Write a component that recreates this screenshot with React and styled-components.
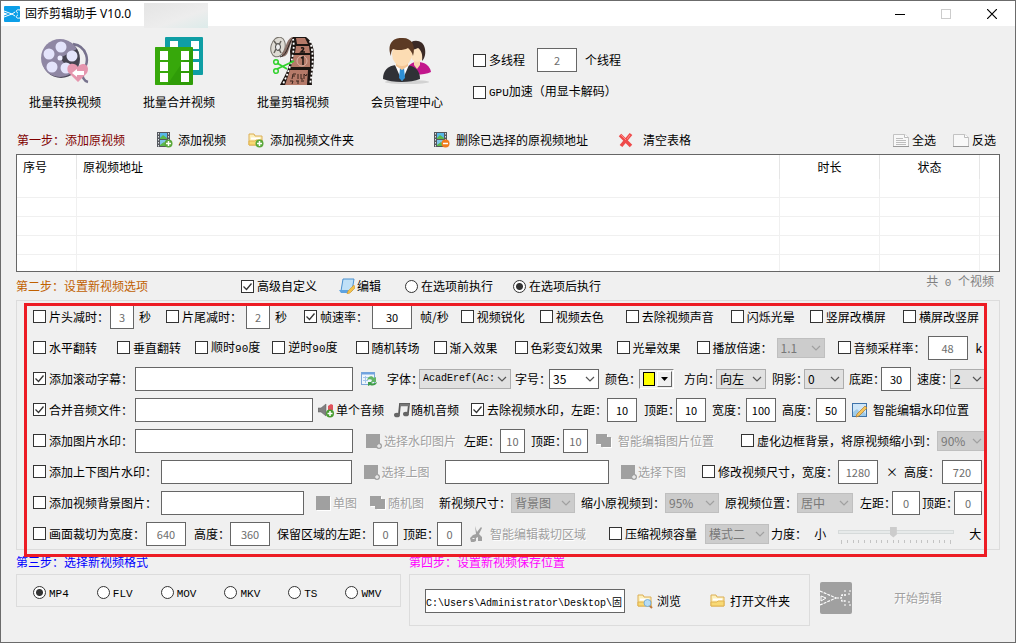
import React from 'react';
import styled, { createGlobalStyle, css } from 'styled-components';

const GlobalStyle = createGlobalStyle`
  * {
    box-sizing: border-box;
  }
  body {
    margin: 0;
    background: #f0f0f0;
    color: #000;
    font-family: 'Noto Sans CJK SC', sans-serif;
    font-size: 12px;
    line-height: 16px;
  }
  button,
  input,
  select {
    font: inherit;
    color: inherit;
    margin: 0;
  }
  svg {
    display: block;
    flex: none;
  }
`;

const gap = css`
  margin-left: ${({ $gap = 0 }) => $gap}px;
`;

const Window = styled.div`
  min-height: 100vh;
  display: flex;
  flex-direction: column;
  border: 1px solid #6b6b6b;
  background: #f0f0f0;
  white-space: nowrap;
  overflow: hidden;
`;

const TitleBar = styled.header`
  height: 25px;
  display: flex;
  align-items: center;
  padding-left: 3px;
  background: #fff;
`;

const Title = styled.h1`
  margin: 0 0 0 5px;
  width: 115px;
  font-family: 'Noto Sans', 'Noto Sans CJK SC', sans-serif;
  font-size: 12px;
  font-weight: normal;
`;

const Smudge = styled.span`
  width: 64px;
  height: 25px;
  margin: 2px 0 0 4px;
  align-self: flex-start;
  background: linear-gradient(160deg, #e4e4e4, #ededed 60%, #dcebea);
`;

const WindowButtons = styled.div`
  display: flex;
  margin-left: auto;
`;

const WindowButton = styled.button`
  width: 46px;
  height: 25px;
  padding: 0;
  display: flex;
  align-items: center;
  justify-content: center;
  border: 0;
  background: none;
`;

const Toolbar = styled.div`
  display: flex;
  height: 100px;
  padding: 11px 8px 0 7px;
`;

const ToolButton = styled.button`
  width: 114px;
  height: 74px;
  padding: 0;
  display: flex;
  flex-direction: column;
  align-items: center;
  gap: 8px;
  border: 0;
  background: none;
  line-height: 18px;
`;

const Threads = styled.div`
  display: flex;
  flex-direction: column;
  gap: 8px;
  padding: 11px 0 0 9px;
`;

const ThreadRow = styled.div`
  display: flex;
  align-items: center;
  height: 24px;
`;

const ActionBar = styled.div`
  display: flex;
  align-items: center;
  height: 28px;
  padding: 0 19px 0 16px;
`;

const StepTitle = styled.h2`
  margin: 0;
  font-size: 12px;
  font-weight: normal;
  color: ${({ $color }) => $color};
`;

const IconButton = styled.button`
  ${gap}
  flex: none;
  display: flex;
  align-items: center;
  gap: ${({ $space = 2 }) => $space}px;
  padding: 0;
  border: 0;
  background: none;
  &:disabled {
    color: #a0a0a0;
    text-shadow: 1px 1px #fff;
  }
`;

const Push = styled.div`
  display: flex;
  margin-left: auto;
`;

const Main = styled.main`
  padding: 0 15px;
`;

const TableFrame = styled.div`
  height: 118px;
  border: 1px solid #666;
  background: #fff;
  overflow: hidden;
`;

const VideoTable = styled.table`
  width: 100%;
  table-layout: fixed;
  border-collapse: separate;
  border-spacing: 0;
  th {
    height: 24px;
    padding: 0 6px;
    border-right: 1px solid #e5e5e5;
    font-weight: normal;
  }
  td {
    height: 19px;
    padding: 0;
    border-right: 1px solid #f0f0f0;
    border-bottom: 1px solid #f0f0f0;
  }
  th:last-child,
  td:last-child {
    border-right: 0;
  }
`;

const Th = styled.th`
  width: ${({ $width }) => ($width ? `${$width}px` : 'auto')};
  text-align: ${({ $align = 'left' }) => $align};
`;

const OptionBar = styled.div`
  display: flex;
  align-items: center;
  height: 28px;
`;

const Count = styled.span`
  margin-left: auto;
  padding: 0 6px 8px 0;
  color: #808080;
`;

const Group = styled.section`
  position: relative;
  border: 1px solid #dcdcdc;
`;

const Rows = styled.div`
  margin-right: 15px;
  overflow: hidden;
`;

const Row = styled.div`
  height: 31px;
  display: flex;
  align-items: center;
  padding: 0 ${({ $end = 0 }) => $end}px 0 16px;
`;

// red marker frame drawn over the option group
const Highlight = styled.div`
  position: absolute;
  top: 2px;
  left: 7px;
  right: 12px;
  bottom: -8px;
  border: 3px solid #ed1c24;
  pointer-events: none;
`;

const TickLabel = styled.label`
  ${gap}
  flex: none;
  display: flex;
  align-items: center;
  gap: 3px;
`;

const TickInput = styled.input`
  appearance: none;
  flex: none;
  width: 13px;
  height: 13px;
  border: 1px solid #333;
  border-radius: ${({ type }) => (type === 'radio' ? '50%' : 0)};
  background: #fff center no-repeat;
  &[type='checkbox']:checked {
    background-image: url("data:image/svg+xml,%3Csvg xmlns='http://www.w3.org/2000/svg' width='11' height='11'%3E%3Cpath d='M1.5 5.5l3 3 5-6' fill='none' stroke='%23333' stroke-width='1.3'/%3E%3C/svg%3E");
  }
  &[type='radio']:checked {
    background-image: radial-gradient(circle, #333 3px, transparent 4px);
  }
`;

const Text = styled.span`
  ${gap}
  flex: none;
`;

const Ascii = styled.span`
  font-family: 'Liberation Mono', monospace;
  font-size: 11px;
`;

const FieldLabel = styled.label`
  ${gap}
  flex: none;
  display: flex;
  align-items: center;
`;

// short captions run right up to their box
const Caption = styled.span`
  width: ${({ $tight }) => ($tight ? '32px' : 'auto')};
`;

const NumberBox = styled.input`
  ${gap}
  flex: none;
  width: ${({ $width = 24 }) => $width}px;
  height: 24px;
  padding: 0;
  border: 1px solid #666;
  background: #fff;
  font-size: 11px;
  text-align: center;
  &:disabled {
    color: #6d6d6d;
  }
`;

const TextBox = styled.input`
  ${gap}
  flex: ${({ $grow = 1 }) => $grow} 1 0;
  min-width: 60px;
  height: 24px;
  padding: 0 2px;
  border: 1px solid #666;
  background: #fff;
`;

const PathBox = styled.input`
  width: 200px;
  height: 24px;
  padding: 0;
  border: 1px solid #666;
  background: #fff;
  font-family: 'Liberation Mono', 'Noto Sans CJK SC', monospace;
  font-size: 10px;
`;

const SelectWrap = styled.span`
  ${gap}
  flex: none;
  display: grid;
  grid-template-areas: 'box';
  align-items: center;
  justify-items: end;
  width: ${({ $width }) => $width}px;
  margin-right: ${({ $bleed = 0 }) => -$bleed}px;
  svg {
    grid-area: box;
    margin-right: 4px;
    pointer-events: none;
  }
`;

const SelectBox = styled.select`
  grid-area: box;
  appearance: none;
  width: 100%;
  height: 20px;
  padding: 0 14px 0 3px;
  border: 1px solid ${({ $white }) => ($white ? '#666' : '#adadad')};
  border-radius: 0;
  background: ${({ $white }) => ($white ? '#fff' : '#e1e1e1')};
  font-size: ${({ $mono }) => ($mono ? 10 : 12)}px;
  font-family: ${({ $mono }) =>
    $mono ? "'Liberation Mono', monospace" : 'inherit'};
  &:disabled {
    opacity: 1;
    border-color: #bfbfbf;
    background: #ccc;
    color: #787878;
  }
`;

const ColorButton = styled.button`
  ${gap}
  flex: none;
  display: flex;
  width: 35px;
  height: 20px;
  padding: 1px;
  border: 1px solid;
  border-color: #888 #fff #fff #888;
  background: #f0f0f0;
`;

const Swatch = styled.span`
  width: 12px;
  height: 14px;
  margin: 1px 2px;
  border: 1px solid #000;
  background: #ff0;
`;

const DropPart = styled.span`
  flex: 1;
  height: 16px;
  display: flex;
  align-items: center;
  justify-content: center;
  border: 1px solid;
  border-color: #fff #666 #666 #fff;
`;

const SliderBox = styled.div`
  ${gap}
  flex: none;
  width: 116px;
  display: flex;
  flex-direction: column;
  gap: 2px;
  padding-top: 2px;
`;

const Range = styled.input`
  appearance: none;
  width: 100%;
  height: 12px;
  background: none;
  &::-webkit-slider-runnable-track {
    height: 4px;
    border: 1px solid #d6dada;
    background: #e7eaea;
  }
  &::-webkit-slider-thumb {
    appearance: none;
    width: 7px;
    height: 11px;
    margin-top: -4px;
    background: #ccc;
    clip-path: polygon(0 0, 100% 0, 100% 72%, 50% 100%, 0 72%);
  }
`;

const Ticks = styled.div`
  display: flex;
  justify-content: space-between;
  align-items: flex-start;
  padding: 0 3px;
`;

const TickMark = styled.span`
  width: 1px;
  height: ${({ $tall }) => ($tall ? 4 : 3)}px;
  background: #c4c4c4;
`;

const Bottom = styled.div`
  display: grid;
  grid-template-columns: 385fr 401fr 182px;
  column-gap: 8px;
  align-items: start;
`;

const BottomTitle = styled(StepTitle)`
  line-height: 24px;
`;

const FormatBox = styled.div`
  display: flex;
  align-items: center;
  gap: 28px;
  height: 33px;
  padding: 4px 16px 0;
  border: 1px solid #dcdcdc;
`;

const SaveBox = styled.div`
  display: flex;
  align-items: center;
  height: 52px;
  padding: 2px 15px 0;
  border: 1px solid #dcdcdc;
`;

const StartButton = styled(IconButton)`
  padding-top: 32px;
`;

const Svg = ({ size = 16, box = size, children }) => (
  <svg width={size} height={size} viewBox={`0 0 ${box} ${box}`} aria-hidden="true">
    {children}
  </svg>
);

const AppIcon = () => (
  <Svg>
    <rect width="16" height="16" rx="1" fill="#0c9fe8" />
    <path d="M0 5l8 3 3-2M0 11l8-3 3 2" stroke="#fff" fill="none" />
    <path d="M0 6.500l4 1.500-4 1.500z" fill="#fff" />
    <path d="M16 4c-4-1-5 2-2 3M16 12c-4 1-5-2-2-3" stroke="#fff" fill="none" />
  </Svg>
);

const ReelIcon = () => (
  <Svg size={48}>
    <path d="M32 7c14 2 18 18 9 27 0 7 2 10 6 11" fill="none" stroke="#77728d" strokeWidth="2.500" />
    <circle cx="20" cy="22" r="19" fill="#4e4a5c" />
    <circle cx="19" cy="21" r="19" fill="#8f87a4" />
    <path d="M19 21L36 12a19 19 0 0 1-5 24z" fill="#464350" />
    {[[20, 10], [8, 17], [31, 19], [11, 30], [25, 31]].map(([x, y]) => (
      <circle key={`${x}-${y}`} cx={x} cy={y} r="5.500" fill="#e4e4fb" />
    ))}
    <circle cx="19" cy="21" r="2.500" fill="#eef" />
    <path d="M37 45L27 35c-3-8 6-11 10-5 4-6 13-2 9 6z" fill="#e596ae" />
    <path d="M31 36l5-4v2h7v4h-7v2z" fill="#fff" />
  </Svg>
);

const MergeIcon = () => (
  <Svg size={48}>
    <rect x="10" width="38" height="38" rx="1" fill="#0f9ea4" />
    {[4, 14, 25].map((y) => (
      <React.Fragment key={y}>
        <rect x="15" y={y} width="8" height="8" fill="#fff" />
        <rect x="36" y={y} width="8" height="8" fill="#fff" />
      </React.Fragment>
    ))}
    <rect y="10" width="38" height="38" rx="1" fill="#2f9c08" />
    <path d="M0 10h38L12 48H0z" fill="#3fb40d" opacity="0.500" />
    {[14, 25, 36].map((y) => (
      <React.Fragment key={y}>
        <rect x="5" y={y} width="8" height="9" fill="#fff" />
        <rect x="26" y={y} width="8" height="9" fill="#fff" />
      </React.Fragment>
    ))}
  </Svg>
);

const FilmStripIcon = () => (
  <Svg size={48}>
    <ellipse cx="9" cy="10" rx="7" ry="10" fill="#dedbd4" stroke="#77736c" transform="rotate(15 9 10)" />
    <ellipse cx="9" cy="10" rx="2.500" ry="3.500" fill="#eee" stroke="#444" />
    <path d="M5 4l3 4M12 4l-2 4M5 16l2-4M12 16l-2-4" stroke="#66625c" strokeWidth="1.500" />
    <path d="M13 18C20 18 16 2 27 1" fill="none" stroke="#8a7068" strokeWidth="4" />
    <path d="M11 20c9-2 8-18 15-20" fill="none" stroke="#2a211e" />
    <path d="M24 0h13c7 5 8 12 8 20 0 12-3 20-2 28H11c5-10 12-20 10-34z" fill="#1c1512" />
    <path d="M27 1h9l3 6H28zM27 9h13l1 7H26zM25 18h16v12H22zM21 33h18l-1 15H16z" fill="#b57a69" />
    <path d="M24 2c2 8 0 24-10 45M41 4c4 12 3 28 0 43" fill="none" stroke="#fff" strokeWidth="1.800" strokeDasharray="2 2" />
    <circle cx="33" cy="24" r="5" fill="none" stroke="#dbb1a4" />
    <path d="M32 21l2-1v8M32 11q4-1 2 2l-2 2h4" fill="none" stroke="#1c1512" strokeWidth="1.500" />
    <path d="M24 37l-1 5m1-5h3m-3 2h2m3-2v5m3-5v5h2m1-5v5m0-5l2 2 1-2M21 44h3l-1 3m4-3h3m-1 0v3m3-3h3" fill="none" stroke="#3a241d" />
    <path d="M8 32l17-8M8 26l10 6" stroke="#31d12c" strokeWidth="1.800" />
    <circle cx="7" cy="25" r="2.300" fill="none" stroke="#31d12c" strokeWidth="1.500" />
    <circle cx="7" cy="34" r="2.300" fill="none" stroke="#31d12c" strokeWidth="1.500" />
  </Svg>
);

const UsersIcon = () => (
  <Svg size={48}>
    <ellipse cx="24" cy="45" rx="22" ry="2" fill="#d2d2d2" />
    <path d="M24 37c0-9 4-12 11-12s12 4 13 10c-6 3-16 3-24 2z" fill="#c2168c" />
    <path d="M31 22h6v6l-3 4-3-4z" fill="#f8d5ae" />
    <ellipse cx="34" cy="16" rx="7" ry="9" fill="#fde3c0" />
    <path d="M25 9c3-8 16-7 17 3 1 6-1 10-3 12 1-7-1-11-4-13-4 2-8 2-10 2z" fill="#3b2a26" />
    <path d="M0 42c0-9 5-13 13-14h10c9 1 14 5 14 14-9 4-28 4-37 0z" fill="#303136" />
    <path d="M12 28h14l-7 16z" fill="#fff" />
    <path d="M17 31h4l1 10-3 3-3-3z" fill="#2d8fd6" />
    <path d="M13 23h12v6l-6 4-6-4z" fill="#f3c493" />
    <ellipse cx="19" cy="17" rx="10" ry="12" fill="#fcdcb3" />
    <path d="M8 19C3 5 12 0 20 1c9 0 13 8 10 18-1-4-3-6-5-8-5 3-13 2-15 1-2 2-2 4-2 7z" fill="#5c3a24" />
  </Svg>
);

const Film = () => (
  <>
    <rect x="0" y="0" width="13" height="15" fill="#54585e" />
    <rect x="3" y="1" width="7" height="6" fill="#58b7e8" />
    <rect x="3" y="8" width="7" height="6" fill="#7fc4ea" />
    <path d="M3 6l3-3 4 3v1H3zM3 13l4-3 3 3v1H3z" fill="#5cb84a" />
    <path d="M1.500 1v14M11.500 1v14" stroke="#dfe3e6" strokeDasharray="1.500 1.500" />
  </>
);

const Badge = ({ color, minus, x = 11.5, y = 11.5 }) => (
  <>
    <circle cx={x} cy={y} r="4" fill={color} />
    <path
      d={minus ? `M${x - 2.5} ${y}h5` : `M${x - 2.5} ${y}h5M${x} ${y - 2.5}v5`}
      stroke="#fff"
      strokeWidth="1.500"
    />
  </>
);

const Folder = () => (
  <>
    <path d="M1 2h5l1 2h7v9H1z" fill="#fdf0bb" stroke="#dcae55" />
    <path d="M3 6.500h9" stroke="#fff" strokeWidth="2" />
    <path d="M1 13V9h6l1-1h6v5z" fill="#f8d974" stroke="#e0b350" />
  </>
);

const PageIcon = ({ lines }) => (
  <Svg>
    <path d="M.5 2.500h11l4 3v9H.5z" fill="#f8f8f8" stroke="#c3c3c3" />
    <path d="M11.500 2.500v3h4" fill="#fff" stroke="#bbb" />
    <path d="M0 14.500h16" stroke="#999" />
    {lines && <path d="M3 6.500h7M3 8.500h10M3 10.500h10M3 12.500h10" stroke="#bdbdbd" />}
  </Svg>
);

const CrossIcon = () => (
  <Svg>
    <path d="M2 3l11 11M13 2L3 14" stroke="#ee4a4a" strokeWidth="3.500" />
    <path d="M3 3l5 5M12 3L9 7" stroke="#ff8b88" />
  </Svg>
);

const EditIcon = () => (
  <Svg>
    <path d="M4 1h11l-2 12H2z" fill="#bfe0f7" stroke="#4a90cf" />
    <path d="M0 12h9l1 3H2z" fill="#5ea3e0" />
    <path d="M15 7l-6 6-1 3 3-1 5-5z" fill="#f5c24a" stroke="#c98a1c" strokeWidth="0.500" />
  </Svg>
);

const SheetIcon = () => (
  <Svg>
    <rect x="0.500" y="1.500" width="13" height="12" fill="#eef5fc" stroke="#7ba6d8" />
    <path d="M1 2.500h12" stroke="#6fa2e0" strokeWidth="2" />
    <path d="M2 6.500h8M2 9.500h5M4.500 5v7" stroke="#a5c6ea" />
    <path d="M6 9c1-4 5-5 7-2l2-1v5h-5l1-2c-1-1-3-1-5 0z" fill="#62b566" />
    <path d="M16 11c-1 4-5 4-7 3l-2 1v-4h5l-2 1c2 1 4 0 6-1z" fill="#3f9c48" />
  </Svg>
);

const SpeakerIcon = () => (
  <Svg>
    <path d="M0 6h3l5-4v12l-5-4H0z" fill="#808080" stroke="#5c5c5c" strokeWidth="0.500" />
    <path d="M10 4l3-2 2 1v5h-5z" fill="#e0525c" />
    <Badge color="#469b2e" x={12} />
  </Svg>
);

const NoteIcon = () => (
  <Svg>
    <path d="M5 12L6 2h9l-1 9" fill="none" stroke="#5a5a5a" strokeWidth="1.800" />
    <path d="M6 3h9" stroke="#777" strokeWidth="2.500" />
    <ellipse cx="3" cy="13" rx="3" ry="2.300" fill="#666" />
    <ellipse cx="12" cy="12" rx="3" ry="2.300" fill="#666" />
  </Svg>
);

const PencilIcon = () => (
  <Svg>
    <rect x="0.500" y="1.500" width="14" height="13" fill="#cfe6f8" stroke="#3f73aa" />
    <path d="M1 10l4-3 4 4 2-2 3 3v2H1z" fill="#9fcbe8" />
    <path d="M13 4L5 12l-1 3 3-1 8-8z" fill="#f4c55e" stroke="#b3782a" strokeWidth="0.700" />
  </Svg>
);

const GreyAddIcon = () => (
  <Svg>
    <path d="M0 1h14v14H0z" fill="#a0a0a0" />
    <circle cx="13" cy="13" r="3" fill="#a0a0a0" />
    <path d="M11 13h4M13 11v4" stroke="#fff" />
  </Svg>
);

const GreySquareIcon = () => (
  <Svg>
    <path d="M1 2h14v14H1z" fill="#fff" />
    <path d="M0 1h14v14H0z" fill="#a0a0a0" />
  </Svg>
);

const GreyStackIcon = () => (
  <Svg>
    <path d="M0 1h11v3h4v10H6v-3H0z" fill="#fff" transform="translate(1 1)" />
    <path d="M0 1h11v3h4v10H5v-3H0z" fill="#a0a0a0" />
  </Svg>
);

const GreyScissorsIcon = () => (
  <Svg>
    <path d="M5 0l2 6 4-5 1 1-3 6 3 3v4H8v-4l-2 1v3l-2 1H1l-1-4 3-3 3-1z" fill="#a0a0a0" />
    <path d="M2.500 12.500h2" stroke="#f0f0f0" />
  </Svg>
);

const StartIcon = () => (
  <Svg size={32}>
    <rect width="32" height="32" rx="2" fill="#a0a0a0" />
    <path d="M0 9l16 7L0 23M16 16h4" fill="none" stroke="#fff" strokeWidth="1.200" strokeDasharray="3 1" />
    <path d="M1 14l5 2-5 3z" fill="none" stroke="#fff" />
    <path d="M26 13h-4l-1 3 1 3h4" fill="none" stroke="#fff" strokeWidth="1.500" strokeDasharray="2 1" />
    <path d="M24 9h2m3 0h2M30 12h-2M24 23h2m3 0h2M30 20h-2" stroke="#fff" />
  </Svg>
);

const Check = ({ gap: space, checked, type = 'checkbox', name, children }) => (
  <TickLabel $gap={space}>
    <TickInput type={type} name={name} defaultChecked={checked} />
    <span>{children}</span>
  </TickLabel>
);

const Field = ({ gap: space, label, tight, boxGap, width, value, disabled }) => (
  <FieldLabel $gap={space}>
    <Caption $tight={tight}>{label}：</Caption>
    <NumberBox $gap={boxGap} $width={width} defaultValue={value} disabled={disabled} />
  </FieldLabel>
);

const Select = ({ gap: space, width, bleed, white, mono, name, value, disabled }) => (
  <SelectWrap $gap={space} $width={width} $bleed={bleed}>
    <SelectBox $white={white} $mono={mono} aria-label={name} disabled={disabled}>
      <option>{value}</option>
    </SelectBox>
    <svg width="10" height="10" viewBox="0 0 10 10" aria-hidden="true">
      <path d="M1 3l4 4 4-4" fill="none" stroke={disabled ? '#a0a0a0' : '#555'} strokeWidth="1.200" />
    </svg>
  </SelectWrap>
);

const App = () => (
  <>
    <GlobalStyle />
    <Window>
      <TitleBar>
        <AppIcon />
        <Title>固乔剪辑助手 V10.0</Title>
        <Smudge />
        <WindowButtons>
          <WindowButton aria-label="最小化">
            <Svg size={10}>
              <path d="M0 5.500h10" stroke="#000" />
            </Svg>
          </WindowButton>
          <WindowButton aria-label="最大化" disabled>
            <Svg size={10}>
              <rect x="0.500" y="0.500" width="9" height="9" fill="none" stroke="#ccc" />
            </Svg>
          </WindowButton>
          <WindowButton aria-label="关闭">
            <Svg size={10}>
              <path d="M0 0l10 10M10 0L0 10" stroke="#000" strokeWidth="1.200" />
            </Svg>
          </WindowButton>
        </WindowButtons>
      </TitleBar>

      <Toolbar>
        <ToolButton>
          <ReelIcon />
          批量转换视频
        </ToolButton>
        <ToolButton>
          <MergeIcon />
          批量合并视频
        </ToolButton>
        <ToolButton>
          <FilmStripIcon />
          批量剪辑视频
        </ToolButton>
        <ToolButton>
          <UsersIcon />
          会员管理中心
        </ToolButton>
        <Threads>
          <ThreadRow>
            <Check>多线程</Check>
            <NumberBox $gap={12} $width={40} defaultValue="2" aria-label="线程数" disabled />
            <Text $gap={8}>个线程</Text>
          </ThreadRow>
          <ThreadRow>
            <Check>
              <Ascii>GPU</Ascii>加速（用显卡解码）
            </Check>
          </ThreadRow>
        </Threads>
      </Toolbar>

      <ActionBar>
        <StepTitle $color="#800000">第一步：添加原视频</StepTitle>
        <IconButton $gap={32} $space={5}>
          <Svg>
            <Film />
            <Badge color="#5aa83a" />
          </Svg>
          添加视频
        </IconButton>
        <IconButton $gap={22} $space={6}>
          <Svg>
            <Folder />
            <Badge color="#5aa83a" />
          </Svg>
          添加视频文件夹
        </IconButton>
        <IconButton $gap={80} $space={6}>
          <Svg>
            <Film />
            <Badge color="#f07b1c" minus />
          </Svg>
          删除已选择的原视频地址
        </IconButton>
        <IconButton $gap={30} $space={9}>
          <CrossIcon />
          清空表格
        </IconButton>
        <Push>
          <IconButton $space={3}>
            <PageIcon lines />
            全选
          </IconButton>
          <IconButton $gap={17} $space={3}>
            <PageIcon />
            反选
          </IconButton>
        </Push>
      </ActionBar>

      <Main>
        <TableFrame>
          <VideoTable>
            <thead>
              <tr>
                <Th $width={60}>序号</Th>
                <Th>原视频地址</Th>
                <Th $width={100} $align="center">时长</Th>
                <Th $width={100} $align="center">状态</Th>
                <Th $width={19} aria-hidden="true" />
              </tr>
            </thead>
            <tbody>
              {[0, 1, 2, 3, 4].map((row) => (
                <tr key={row}>
                  <td />
                  <td />
                  <td />
                  <td />
                  <td />
                </tr>
              ))}
            </tbody>
          </VideoTable>
        </TableFrame>

        <OptionBar>
          <StepTitle $color="#c06000">第二步：设置新视频选项</StepTitle>
          <Check gap={93} checked>高级自定义</Check>
          <IconButton $gap={22}>
            <EditIcon />
            编辑
          </IconButton>
          <Check gap={24} type="radio" name="order">在选项前执行</Check>
          <Check gap={20} type="radio" name="order" checked>在选项后执行</Check>
          <Count>
            共<Ascii> 0 </Ascii>个视频
          </Count>
        </OptionBar>

        <Group>
          <Rows>
            <Row>
              <Check>片头减时：</Check>
              <NumberBox $gap={1} defaultValue="3" aria-label="片头减时" disabled />
              <Text $gap={5}>秒</Text>
              <Check gap={15}>片尾减时：</Check>
              <NumberBox $gap={4} defaultValue="2" aria-label="片尾减时" disabled />
              <Text $gap={5}>秒</Text>
              <Check gap={17} checked>帧速率：</Check>
              <NumberBox $gap={4} $width={40} defaultValue="30" aria-label="帧速率" />
              <Text $gap={8}>帧/秒</Text>
              <Check gap={12}>视频锐化</Check>
              <Check gap={15}>视频去色</Check>
              <Check gap={22}>去除视频声音</Check>
              <Check gap={17}>闪烁光晕</Check>
              <Check gap={15}>竖屏改横屏</Check>
              <Check gap={17}>横屏改竖屏</Check>
            </Row>
            <Row>
              <Check>水平翻转</Check>
              <Check gap={20}>垂直翻转</Check>
              <Check gap={14}>
                顺时<Ascii>90</Ascii>度
              </Check>
              <Check gap={12}>
                逆时<Ascii>90</Ascii>度
              </Check>
              <Check gap={18}>随机转场</Check>
              <Check gap={14}>渐入效果</Check>
              <Check gap={17}>色彩变幻效果</Check>
              <Check gap={14}>光晕效果</Check>
              <Check gap={16}>播放倍速：</Check>
              <Select gap={4} width={48} name="播放倍速" value="1.1" disabled />
              <Check gap={13}>音频采样率：</Check>
              <NumberBox $gap={2} $width={40} defaultValue="48" aria-label="音频采样率" disabled />
              <Text $gap={8}>k</Text>
            </Row>
            <Row>
              <Check checked>添加滚动字幕：</Check>
              <TextBox $gap={2} aria-label="滚动字幕" />
              <IconButton $gap={8} aria-label="选择字幕">
                <SheetIcon />
              </IconButton>
              <FieldLabel $gap={10}>
                <Caption $tight>字体：</Caption>
                <Select width={92} name="字体" value="AcadEref(Ac:" mono />
              </FieldLabel>
              <FieldLabel $gap={4}>
                <Caption $tight>字号：</Caption>
                <Select gap={2} width={50} name="字号" value="35" white />
              </FieldLabel>
              <FieldLabel as="span" $gap={6}>
                <Caption $tight>颜色：</Caption>
              </FieldLabel>
              <ColorButton $gap={2} aria-label="颜色">
                <Swatch />
                <DropPart>
                  <svg width="7" height="4" aria-hidden="true">
                    <path d="M0 0h7L3.500 4z" />
                  </svg>
                </DropPart>
              </ColorButton>
              <FieldLabel $gap={10}>
                <Caption $tight>方向：</Caption>
                <Select width={50} name="方向" value="向左" />
              </FieldLabel>
              <FieldLabel $gap={6}>
                <Caption $tight>阴影：</Caption>
                <Select width={40} name="阴影" value="0" />
              </FieldLabel>
              <Field gap={5} label="底距" tight width={30} value="30" />
              <FieldLabel $gap={6}>
                <Caption $tight>速度：</Caption>
                <Select gap={1} width={36} bleed={2} name="速度" value="2" />
              </FieldLabel>
            </Row>
            <Row $end={15}>
              <Check checked>合并音频文件：</Check>
              <TextBox $gap={2} aria-label="音频文件" />
              <IconButton $gap={5}>
                <SpeakerIcon />
                单个音频
              </IconButton>
              <IconButton $gap={10} $space={1}>
                <NoteIcon />
                随机音频
              </IconButton>
              <Check gap={12} checked>去除视频水印，</Check>
              <Field label="左距" width={30} value="10" />
              <Field gap={7} label="顶距" tight width={30} value="10" />
              <Field gap={6} label="宽度" tight boxGap={2} width={30} value="100" />
              <Field gap={6} label="高度" tight boxGap={2} width={30} value="50" />
              <IconButton $gap={6} $space={5}>
                <PencilIcon />
                智能编辑水印位置
              </IconButton>
            </Row>
            <Row>
              <Check>添加图片水印：</Check>
              <TextBox $gap={2} aria-label="图片水印" />
              <IconButton $gap={13} disabled>
                <GreyAddIcon />
                选择水印图片
              </IconButton>
              <Field gap={8} label="左距" width={25} value="10" disabled />
              <Field gap={6} label="顶距" tight width={25} value="10" disabled />
              <IconButton $gap={8} $space={6} disabled>
                <GreyStackIcon />
                智能编辑图片位置
              </IconButton>
              <Check gap={27}>虚化边框背景，将原视频缩小到：</Check>
              <Select width={49} bleed={2} name="缩小到" value="90%" disabled />
            </Row>
            <Row $end={2}>
              <Check>添加上下图片水印：</Check>
              <TextBox $gap={4} $grow={192} aria-label="上图" />
              <IconButton $gap={12} $space={1} disabled>
                <GreyAddIcon />
                选择上图
              </IconButton>
              <TextBox $gap={15} $grow={164} aria-label="下图" />
              <IconButton $gap={12} $space={1} disabled>
                <GreyAddIcon />
                选择下图
              </IconButton>
              <Check gap={16}>修改视频尺寸，宽度：</Check>
              <NumberBox $width={40} defaultValue="1280" aria-label="宽度" disabled />
              <Text $gap={8}>×</Text>
              <Field gap={6} label="高度" boxGap={2} width={40} value="720" disabled />
            </Row>
            <Row $end={2}>
              <Check>添加视频背景图片：</Check>
              <TextBox $gap={4} aria-label="背景图片" />
              <IconButton $gap={12} $space={1} disabled>
                <GreySquareIcon />
                单图
              </IconButton>
              <IconButton $gap={13} disabled>
                <GreyStackIcon />
                随机图
              </IconButton>
              <FieldLabel $gap={15}>
                新视频尺寸：
                <Select width={64} name="新视频尺寸" value="背景图" disabled />
              </FieldLabel>
              <FieldLabel $gap={6}>
                缩小原视频到：
                <Select width={54} name="缩小原视频到" value="95%" disabled />
              </FieldLabel>
              <FieldLabel $gap={6}>
                原视频位置：
                <Select width={56} name="原视频位置" value="居中" disabled />
              </FieldLabel>
              <Field gap={7} label="左距" tight width={28} value="0" disabled />
              <Field gap={2} label="顶距" tight width={28} value="0" disabled />
            </Row>
            <Row>
              <Check>画面裁切为宽度：</Check>
              <NumberBox $gap={1} $width={40} defaultValue="640" aria-label="裁切宽度" disabled />
              <Field gap={8} label="高度" width={40} value="360" disabled />
              <Field gap={7} label="保留区域的左距" width={25} value="0" disabled />
              <Field gap={5} label="顶距" tight boxGap={2} width={25} value="0" disabled />
              <IconButton $gap={8} $space={4} disabled>
                <GreyScissorsIcon />
                智能编辑裁切区域
              </IconButton>
              <Check gap={23}>压缩视频容量</Check>
              <Select gap={8} width={64} name="压缩模式" value="模式二" disabled />
              <Text $gap={2}>力度：</Text>
              <Text $gap={7}>小</Text>
              <SliderBox $gap={12}>
                <Range type="range" min="0" max="19" defaultValue="9" aria-label="力度" disabled />
                <Ticks>
                  {Array.from({ length: 20 }, (_, i) => (
                    <TickMark key={i} $tall={i === 0 || i === 19} />
                  ))}
                </Ticks>
              </SliderBox>
              <Text $gap={15}>大</Text>
            </Row>
          </Rows>
          <Highlight />
        </Group>

        <Bottom>
          <div>
            <BottomTitle $color="#0000ff">第三步：选择新视频格式</BottomTitle>
            <FormatBox>
              {['MP4', 'FLV', 'MOV', 'MKV', 'TS', 'WMV'].map((format) => (
                <Check key={format} type="radio" name="format" checked={format === 'MP4'}>
                  <Ascii>{format}</Ascii>
                </Check>
              ))}
            </FormatBox>
          </div>
          <div>
            <BottomTitle $color="#ff00ff">第四步：设置新视频保存位置</BottomTitle>
            <SaveBox>
              <PathBox defaultValue="C:\Users\Administrator\Desktop\固" aria-label="保存位置" />
              <IconButton $gap={12} $space={4}>
                <Svg>
                  <Folder />
                  <path d="M12 12l3 3" stroke="#c07a3a" strokeWidth="2" />
                  <circle cx="10.500" cy="10" r="3.500" fill="#b5dcf5" stroke="#7aaed6" />
                </Svg>
                浏览
              </IconButton>
              <IconButton $gap={29} $space={4}>
                <Svg>
                  <Folder />
                </Svg>
                打开文件夹
              </IconButton>
            </SaveBox>
          </div>
          <StartButton $gap={2} $space={42} disabled>
            <StartIcon />
            开始剪辑
          </StartButton>
        </Bottom>
      </Main>
    </Window>
  </>
);

export default App;
